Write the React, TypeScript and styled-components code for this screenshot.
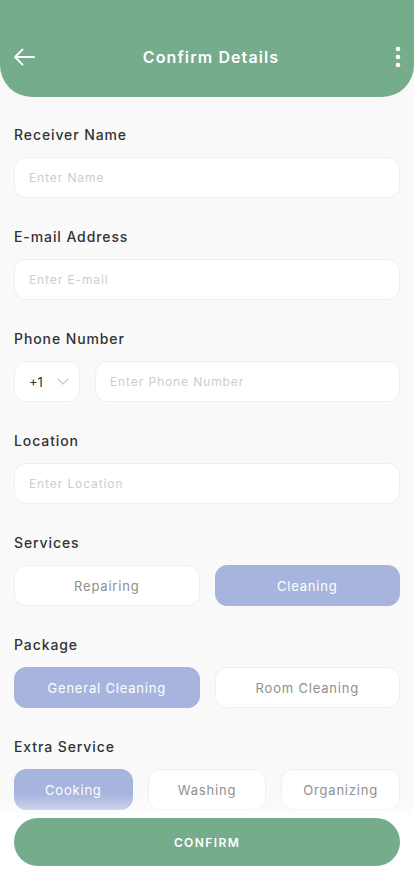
import React, { useState } from 'react';
import styled, { createGlobalStyle } from 'styled-components';

const GlobalStyle = createGlobalStyle`
  html, body {
    margin: 0;
    padding: 0;
    background: #f9f9f9;
    font-family: Inter, "Noto Sans", sans-serif;
  }
  * {
    box-sizing: border-box;
  }
`;

const Screen = styled.div`
  width: 414px;
  min-height: 896px;
  background: #f9f9f9;
  position: relative;
  overflow: hidden;
`;

const Header = styled.div`
  height: 97px;
  background: #75ac8c;
  border-radius: 0 0 32px 32px;
  display: grid;
  grid-template-columns: 1fr auto 1fr;
  align-items: end;
  padding: 0 4px 28px 12px;
  color: #fff;
`;

const IconButton = styled.button<{ end?: boolean }>`
  background: none;
  border: none;
  padding: 0;
  width: 24px;
  height: 24px;
  display: flex;
  align-items: center;
  justify-content: center;
  color: #fff;
  justify-self: ${p => (p.end ? 'end' : 'start')};
`;

const Title = styled.h1`
  margin: 0;
  font-size: 16px;
  font-weight: 600;
  letter-spacing: 1.1px;
  line-height: 24px;
`;

const Form = styled.div`
  display: flex;
  flex-direction: column;
  gap: 29px;
  padding: 28px 14px 0;
`;

const Field = styled.div`
  display: flex;
  flex-direction: column;
  gap: 12px;
`;

const Label = styled.label`
  font-size: 14px;
  font-weight: 500;
  color: #333;
  letter-spacing: 0.9px;
  line-height: 20px;
`;

const Input = styled.input`
  width: 100%;
  height: 41px;
  border: 1px solid #efefef;
  border-radius: 12px;
  background: #fff;
  padding: 0 14px;
  font-family: Inter, sans-serif;
  font-size: 12px;
  letter-spacing: 0.9px;
  color: #333;
  outline: none;
  &::placeholder {
    color: #cdcdcd;
  }
`;

const Row = styled.div<{ cols: string }>`
  display: grid;
  grid-template-columns: ${p => p.cols};
  gap: 15px;
`;

const CountryCode = styled.div`
  height: 41px;
  border: 1px solid #efefef;
  border-radius: 12px;
  background: #fff;
  display: flex;
  align-items: center;
  gap: 14px;
  padding: 0 0 0 14px;
  font-size: 13px;
  color: #333;
`;

const Chip = styled.button<{ active: boolean }>`
  height: 41px;
  border-radius: 12px;
  border: 1px solid ${p => (p.active ? '#a7b5de' : '#efefef')};
  background: ${p => (p.active ? '#a7b5de' : '#fff')};
  color: ${p => (p.active ? '#fff' : '#8f8f8f')};
  font-family: Inter, sans-serif;
  font-size: 13px;
  letter-spacing: 0.8px;
  padding: 0;
`;

const Footer = styled.div`
  position: absolute;
  left: 0;
  right: 0;
  bottom: 0;
  height: 110px;
  padding: 32px 14px 0;
  background: linear-gradient(
    to bottom,
    rgba(255, 255, 255, 0) 8px,
    rgba(255, 255, 255, 0.35) 22px,
    rgba(255, 255, 255, 0.9) 30px,
    #fff 34px
  );
`;

const ConfirmButton = styled.button`
  width: 100%;
  height: 48px;
  border: none;
  border-radius: 24px;
  background: #75ac8c;
  color: #fff;
  font-family: Inter, sans-serif;
  font-size: 12px;
  font-weight: 600;
  letter-spacing: 1.4px;
`;

const services = ['Repairing', 'Cleaning'];
const packages = ['General Cleaning', 'Room Cleaning'];
const extras = ['Cooking', 'Washing', 'Organizing'];

export default function App() {
  const [service, setService] = useState('Cleaning');
  const [pack, setPack] = useState('General Cleaning');
  const [extra, setExtra] = useState('Cooking');

  return (
    <>
      <GlobalStyle />
      <Screen>
        <Header>
          <IconButton aria-label="back">
            <svg width="22" height="18" viewBox="0 0 22 18" fill="none">
              <path
                d="M21 9H2M9.5 1.5L2 9l7.5 7.5"
                stroke="#fff"
                strokeWidth="1.8"
                strokeLinecap="round"
                strokeLinejoin="round"
              />
            </svg>
          </IconButton>
          <Title>Confirm Details</Title>
          <IconButton end aria-label="more">
            <svg width="6" height="22" viewBox="0 0 6 22">
              <circle cx="3" cy="3" r="2.3" fill="#fff" />
              <circle cx="3" cy="11" r="2.3" fill="#fff" />
              <circle cx="3" cy="19" r="2.3" fill="#fff" />
            </svg>
          </IconButton>
        </Header>
        <Form>
          <Field>
            <Label>Receiver Name</Label>
            <Input placeholder="Enter Name" />
          </Field>
          <Field>
            <Label>E-mail Address</Label>
            <Input placeholder="Enter E-mail" />
          </Field>
          <Field>
            <Label>Phone Number</Label>
            <Row cols="66px 1fr">
              <CountryCode>
                +1
                <svg width="12" height="7" viewBox="0 0 12 7" fill="none">
                  <path
                    d="M1 1l5 5 5-5"
                    stroke="#c9c9c9"
                    strokeWidth="1.2"
                    strokeLinecap="round"
                    strokeLinejoin="round"
                  />
                </svg>
              </CountryCode>
              <Input placeholder="Enter Phone Number" />
            </Row>
          </Field>
          <Field>
            <Label>Location</Label>
            <Input placeholder="Enter Location" />
          </Field>
          <Field>
            <Label>Services</Label>
            <Row cols="1fr 1fr">
              {services.map(s => (
                <Chip key={s} active={s === service} onClick={() => setService(s)}>
                  {s}
                </Chip>
              ))}
            </Row>
          </Field>
          <Field>
            <Label>Package</Label>
            <Row cols="1fr 1fr">
              {packages.map(s => (
                <Chip key={s} active={s === pack} onClick={() => setPack(s)}>
                  {s}
                </Chip>
              ))}
            </Row>
          </Field>
          <Field>
            <Label>Extra Service</Label>
            <Row cols="1fr 1fr 1fr">
              {extras.map(s => (
                <Chip key={s} active={s === extra} onClick={() => setExtra(s)}>
                  {s}
                </Chip>
              ))}
            </Row>
          </Field>
        </Form>
        <Footer>
          <ConfirmButton>CONFIRM</ConfirmButton>
        </Footer>
      </Screen>
    </>
  );
}
